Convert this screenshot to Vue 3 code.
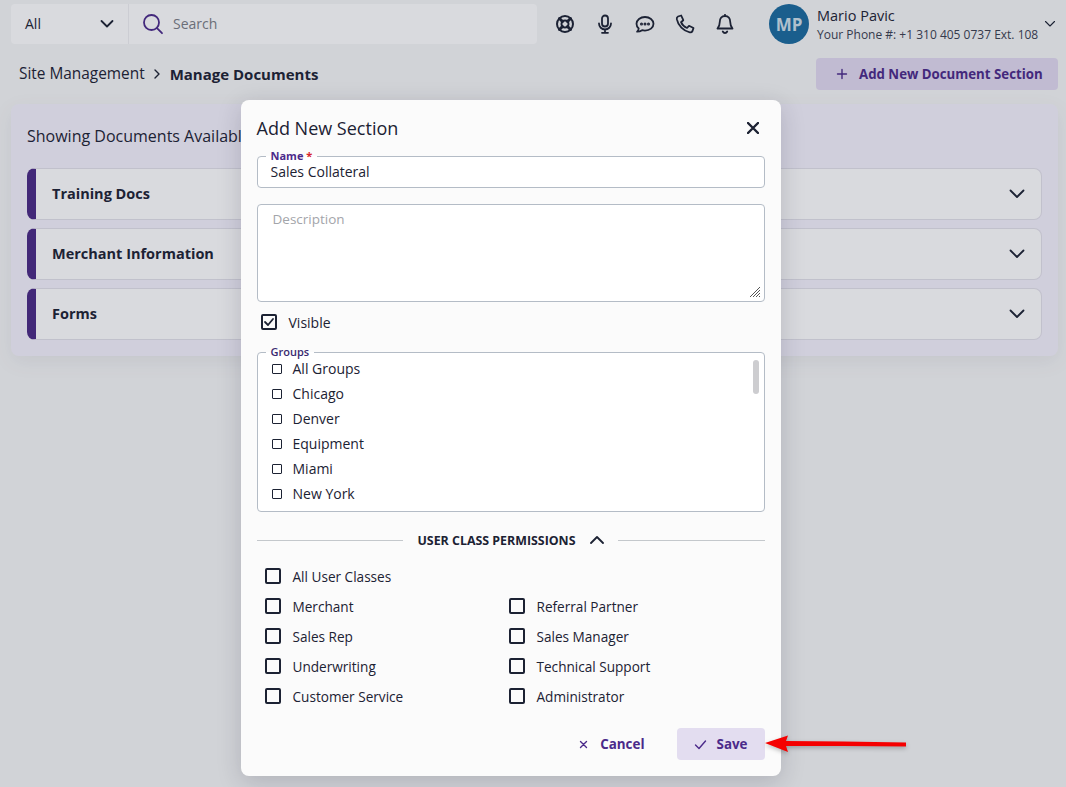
<template>
  <div class="page">
    <header class="topbar">
      <div class="search">
        <div class="scope">
          <span>All</span>
          <svg width="16" height="16" viewBox="0 0 16 16" class="ic"><path d="M2.500 5l5.500 5.500L13.500 5" /></svg>
        </div>
        <div class="search-input">
          <svg width="22" height="22" viewBox="0 0 22 22" class="ic purple"><circle cx="9.500" cy="9.500" r="7.500" /><path d="M15 15.200l5 5" /></svg>
          <span>Search</span>
        </div>
      </div>
      <div class="actions">
        <span class="action">
          <svg width="20" height="20" viewBox="0 0 20 20" class="ic dark"><circle cx="10" cy="10" r="8" stroke-width="2" /><circle cx="10" cy="10" r="3.500" stroke-width="2" /><path d="M4.500 4.500l3 3M15.500 4.500l-3 3M4.500 15.500l3-3M15.500 15.500l-3-3" stroke-width="3" /></svg>
        </span>
        <span class="action">
          <svg width="20" height="20" viewBox="0 0 20 20" class="ic dark"><rect x="7" y="1.500" width="6" height="11" rx="3" /><path d="M4 9.500a6 6 0 0 0 12 0M10 15.500v3M7 18.800h6" /></svg>
        </span>
        <span class="action">
          <svg width="20" height="20" viewBox="0 0 20 20" class="ic dark"><path d="M10 3c4.700 0 8.500 2.900 8.500 6.800s-3.800 6.800-8.500 6.800c-1 0-2-.1-2.900-.4-1.300.9-3 1.500-5 1.500 1-.9 1.500-2 1.600-3.200C2.300 13.300 1.500 11.700 1.500 9.800 1.500 5.900 5.300 3 10 3z" /><circle cx="6.500" cy="10" r=".6" /><circle cx="10" cy="10" r=".6" /><circle cx="13.500" cy="10" r=".6" /></svg>
        </span>
        <span class="action">
          <svg width="20" height="20" viewBox="0 0 20 20" class="ic dark"><path d="M6.200 1.500L3 2.500C2 3 1.600 4 1.800 5.200 3 11.500 8.500 17 14.800 18.300c1.200.2 2.200-.3 2.700-1.300l1-3-4.500-2.200-2 2.200C9 12.800 7.200 11 6 8.200l2.300-2z" /></svg>
        </span>
        <span class="action">
          <svg width="20" height="20" viewBox="0 0 20 20" class="ic dark"><path d="M10 2c-3.300 0-5.200 2.600-5.200 5.800 0 3.500-1 5.200-2.300 6.700h15c-1.300-1.500-2.300-3.200-2.300-6.700C15.200 4.600 13.300 2 10 2zM10 .8V2M7.800 17.500c.5 1 1.300 1.500 2.200 1.500s1.700-.5 2.200-1.500" /></svg>
        </span>
      </div>
      <div class="user">
        <span class="avatar">MP</span>
        <div class="user-text">
          <div class="user-name">Mario Pavic</div>
          <div class="user-phone">Your Phone #: +1 310 405 0737 Ext. 108</div>
        </div>
        <svg width="12" height="12" viewBox="0 0 12 12" class="ic hair"><path d="M1.500 3.500L6 8l4.500-4.500" /></svg>
      </div>
    </header>

    <div class="subbar">
      <div class="crumbs">
        <span>Site Management</span>
        <svg width="12" height="12" viewBox="0 0 12 12" class="ic thin"><path d="M4 2l4 4-4 4" /></svg>
        <strong>Manage Documents</strong>
      </div>
      <button class="add-btn">
        <svg width="12" height="12" viewBox="0 0 12 12" class="ic purple thin"><path d="M6 1.500v9M1.500 6h9" /></svg>
        Add New Document Section
      </button>
    </div>

    <section class="card">
      <p class="card-title">Showing Documents Available to All Groups</p>
      <div v-for="doc in docs" :key="doc" class="doc-row">
        <span class="doc-name">{{ doc }}</span>
        <svg width="16" height="16" viewBox="0 0 16 16" class="ic"><path d="M1.500 4.500L8 11l6.500-6.500" /></svg>
      </div>
    </section>

    <div class="scrim"></div>

    <div class="modal">
      <div class="modal-head">
        <h2>Add New Section</h2>
        <svg width="12" height="12" viewBox="0 0 12 12" class="ic close"><path d="M1 1l10 10M11 1L1 11" /></svg>
      </div>

      <div class="field name-field">
        <label class="legend">Name <em>*</em></label>
        <span>Sales Collateral</span>
      </div>

      <div class="field desc-field">
        <span class="placeholder">Description</span>
        <svg class="grip" width="12" height="12" viewBox="0 0 12 12"><path d="M11 1L1 11M11 4L4 11M11 7L7 11M11 10l-1 1" /></svg>
      </div>

      <label class="visible">
        <span class="box checked">
          <svg width="12" height="12" viewBox="0 0 12 12" class="ic dark"><path d="M2 6l3 3 5-6" /></svg>
        </span>
        Visible
      </label>

      <div class="field groups-field">
        <label class="legend">Groups</label>
        <div class="group-list">
          <div v-for="g in groups" :key="g" class="group-row">
            <span class="mini-box"></span>{{ g }}
          </div>
        </div>
        <span class="thumb"></span>
      </div>

      <div class="divider">
        <span class="divider-label">USER CLASS PERMISSIONS</span>
        <svg width="14" height="14" viewBox="0 0 14 14" class="ic dark"><path d="M1 10l6-6 6 6" /></svg>
      </div>

      <div class="perm-grid">
        <label class="perm wide"><span class="box"></span>All User Classes</label>
        <label v-for="p in perms" :key="p" class="perm"><span class="box"></span>{{ p }}</label>
      </div>

      <div class="modal-foot">
        <button class="ghost">
          <svg width="9" height="9" viewBox="0 0 9 9" class="ic purple thin"><path d="M1.500 1.500l6 6M7.500 1.500l-6 6" /></svg>
          Cancel
        </button>
        <button class="save">
          <svg width="13" height="13" viewBox="0 0 13 13" class="ic purple thin"><path d="M1.500 7l3.500 3.500 6.500-7.500" /></svg>
          Save
        </button>
      </div>
    </div>

    <svg class="arrow" width="146" height="24" viewBox="0 0 146 24">
      <path d="M2 12L25 4.500 23 10 80 10.500 143 11.500V15.500L80 15 23 15 25 21z" fill="#f50000" />
    </svg>
  </div>
</template>

<script setup>
const docs = ["Training Docs", "Merchant Information", "Forms"];
const groups = ["All Groups", "Chicago", "Denver", "Equipment", "Miami", "New York"];
const perms = [
  "Merchant",
  "Referral Partner",
  "Sales Rep",
  "Sales Manager",
  "Underwriting",
  "Technical Support",
  "Customer Service",
  "Administrator",
];
</script>

<style>
html,
body {
  margin: 0;
  background: #f6f7f7;
}
</style>

<style scoped>
.page {
  position: relative;
  height: 787px;
  overflow: hidden;
  background: #f6f7f7;
  color: #1c2233;
  font-family: "Open Sans", "Noto Sans", sans-serif;
  font-size: 14px;
  box-sizing: border-box;
}
.ic {
  fill: none;
  stroke: #1c2233;
  stroke-width: 1.8;
  stroke-linecap: round;
  stroke-linejoin: round;
  flex: none;
}
.ic.purple {
  stroke: #4b2a8a;
}
.ic.thin {
  stroke-width: 1.400;
}
.ic.hair {
  stroke-width: 1.100;
}
.topbar {
  display: flex;
  align-items: center;
  height: 40px;
  padding: 4px 0 0 11px;
}
.search {
  display: flex;
  flex: none;
  width: 526px;
  height: 40px;
  background: #fff;
  border-radius: 4px;
  line-height: 38px;
}
.scope {
  width: 118px;
  box-sizing: border-box;
  display: flex;
  align-items: center;
  justify-content: space-between;
  padding: 0 13px 0 14px;
  border-right: 1px solid #f0f0f2;
}
.search-input {
  display: flex;
  align-items: center;
  gap: 9px;
  padding-left: 13px;
  color: #7b7d85;
}
.actions {
  display: flex;
  flex: none;
  margin-left: 8px;
}
.action {
  width: 40px;
  display: flex;
  justify-content: center;
}
.user {
  display: flex;
  align-items: center;
  flex: none;
  margin-left: 24px;
}
.avatar {
  width: 40px;
  height: 40px;
  border-radius: 50%;
  background: #1a6a9e;
  color: #cfe0ea;
  font-size: 17px;
  font-weight: 700;
  display: flex;
  align-items: center;
  justify-content: center;
  margin-right: 8px;
}
.user-text {
  margin-right: 6px;
}
.user-name {
  font-size: 14.500px;
  line-height: 22px;
}
.user-phone {
  font-size: 12px;
  line-height: 16px;
  color: #3a4050;
  white-space: nowrap;
}
.subbar {
  display: flex;
  align-items: center;
  justify-content: space-between;
  padding: 14px 8px 0 19px;
}
.crumbs {
  display: flex;
  align-items: center;
  gap: 6px;
  padding-bottom: 1px;
  font-size: 15.400px;
}
.crumbs strong {
  margin-left: 1px;
  font-size: 15px;
  font-weight: 700;
}
.add-btn {
  width: 242px;
  height: 32px;
  display: flex;
  align-items: center;
  gap: 11px;
  padding: 0 0 0 20px;
  border: none;
  border-radius: 4px;
  background: #e3daf1;
  color: #4b2a8a;
  font: 700 13.250px "Open Sans", sans-serif;
}
.card {
  margin: 14px 8px 0 11px;
  height: 252px;
  box-sizing: border-box;
  padding: 16px;
  background: #f5f2fd;
  border-radius: 8px;
  box-shadow: 0 6px 20px rgba(60, 60, 90, 0.08);
}
.card-title {
  margin: 6px 0 22px;
  font-size: 16px;
  line-height: 20px;
}
.doc-row {
  height: 52px;
  box-sizing: border-box;
  display: flex;
  align-items: center;
  justify-content: space-between;
  margin-bottom: 8px;
  padding: 0 16px;
  background: #fff;
  border: 1px solid #e3e1ea;
  border-left: 9px solid #4a2a85;
  border-radius: 8px;
}
.doc-name {
  padding-bottom: 2px;
  font-size: 14.500px;
  font-weight: 700;
}
.scrim {
  position: absolute;
  inset: 0;
  background: rgba(29, 35, 58, 0.17);
}
.modal {
  position: absolute;
  left: 240.500px;
  top: 100px;
  width: 540px;
  height: 676px;
  box-sizing: border-box;
  padding: 16px;
  background: #fbfbfb;
  border-radius: 8px;
  box-shadow: 0 6px 24px rgba(30, 30, 50, 0.18);
}
.modal-head {
  display: flex;
  align-items: center;
  justify-content: space-between;
  height: 24px;
  padding-right: 6px;
  margin-bottom: 16px;
}
.modal-head h2 {
  margin: 0;
  font-size: 18px;
  line-height: 24px;
  font-weight: 500;
}
.ic.close {
  stroke-width: 2.400;
}
.field {
  position: relative;
  box-sizing: border-box;
  background: #fff;
  border: 1px solid #b4bcc6;
  border-radius: 4px;
}
.legend {
  position: absolute;
  left: 8px;
  top: -8px;
  padding: 0 5px;
  background: linear-gradient(#fbfbfb 50%, #fff 50%);
  font-size: 11px;
  line-height: 13px;
  font-weight: 700;
  color: #4b2a8a;
}
.legend em {
  color: #d8232a;
  font-style: normal;
}
.name-field {
  height: 32px;
  padding: 6px 13px 0;
  line-height: 17px;
  margin-bottom: 16px;
}
.desc-field {
  height: 98px;
  padding: 5px 15px;
  font-size: 13.500px;
  line-height: 18px;
}
.placeholder {
  color: #a3a5aa;
}
.grip {
  position: absolute;
  right: 3px;
  bottom: 3px;
  fill: none;
  stroke: #555;
  stroke-width: 1;
}
.visible {
  display: flex;
  align-items: center;
  gap: 12px;
  height: 40px;
  padding-left: 4px;
  margin-bottom: 10px;
}
.box {
  width: 16px;
  height: 16px;
  box-sizing: border-box;
  border: 2px solid #1c2233;
  border-radius: 2px;
  display: flex;
  align-items: center;
  justify-content: center;
  flex: none;
}
.groups-field {
  height: 160px;
}
.groups-field .legend {
  color: #3a2a70;
  font-weight: 600;
}
.group-list {
  padding-top: 3px;
}
.group-row {
  display: flex;
  align-items: center;
  gap: 11px;
  height: 25px;
  padding-left: 14px;
}
.mini-box {
  width: 10px;
  height: 10px;
  box-sizing: border-box;
  border: 1.500px solid #1c2233;
  border-radius: 1px;
}
.thumb {
  position: absolute;
  right: 5px;
  top: 7px;
  width: 6px;
  height: 34px;
  border-radius: 3px;
  background: #cdcdd0;
}
.divider {
  display: flex;
  align-items: center;
  gap: 14px;
  height: 16px;
  margin: 20px 0 13px;
}
.divider::before,
.divider::after {
  content: "";
  flex: 1;
  height: 1px;
  background: #c4c8cc;
}
.divider-label {
  font-size: 12.400px;
  font-weight: 700;
  white-space: nowrap;
}
.perm-grid {
  display: grid;
  grid-template-columns: 244px 1fr;
  grid-auto-rows: 30px;
  padding-left: 8px;
  font-size: 13.600px;
}
.perm {
  display: flex;
  align-items: center;
  gap: 12px;
}
.perm.wide {
  grid-column: 1 / -1;
}
.modal-foot {
  display: flex;
  justify-content: flex-end;
  gap: 8px;
  margin-top: 17px;
}
.modal-foot button {
  height: 32px;
  display: flex;
  align-items: center;
  justify-content: center;
  border: none;
  border-radius: 4px;
  color: #4b2a8a;
  font: 700 13.400px "Open Sans", sans-serif;
}
.ghost {
  gap: 12px;
  padding: 0 24px;
  background: transparent;
}
.save {
  gap: 10px;
  width: 88px;
  background: #e3ddf0;
}
.arrow {
  position: absolute;
  left: 763px;
  top: 731px;
  filter: drop-shadow(0 2px 2px rgba(0, 0, 0, 0.25));
}
</style>
